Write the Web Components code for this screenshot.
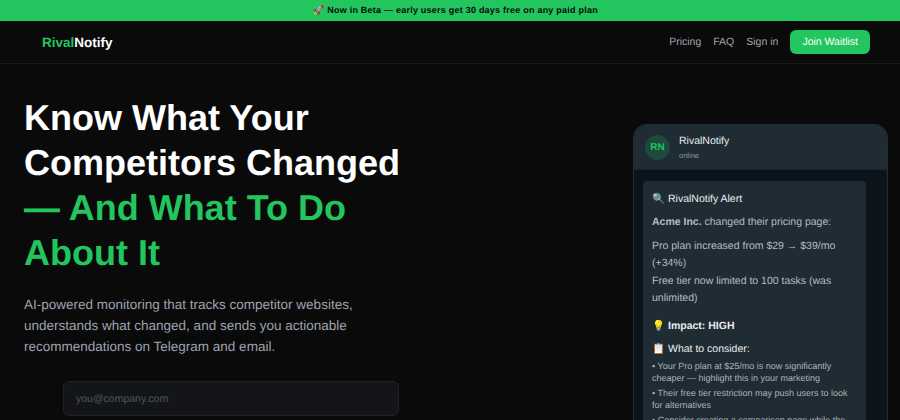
<!DOCTYPE html>
<html><head><meta charset="utf-8"><style>
html,body{margin:0;padding:0;height:420px;overflow:hidden;background:#0a0a0a;font-family:"Liberation Sans",Arial,sans-serif;text-rendering:geometricPrecision}
</style></head><body>
<rn-banner>🚀 Now in Beta — early users get 30 days free on any paid plan</rn-banner>
<rn-nav></rn-nav>
<rn-hero></rn-hero>
<script>
function def(name, html){
  customElements.define(name, class extends HTMLElement{
    constructor(){super();this.attachShadow({mode:'open'}).innerHTML=html;}
  });
}
def('rn-banner',`<style>:host{display:block;height:21px;padding-left:11px;background:#22c55e;color:#0a0a0a;font:bold 9px/21px "Liberation Sans",sans-serif;letter-spacing:.23px;text-align:center}</style><slot></slot>`);
def('rn-nav',`<style>
:host{display:flex;align-items:center;justify-content:space-between;height:42px;padding:0 30px 0 42px;border-bottom:1px solid #1a1a1a}
.logo{font-weight:700;font-size:13.5px;color:#fff}.logo span{color:#22c55e}
.links{display:flex;align-items:center;gap:12px;font-size:10.5px;color:#9ca3af}
.btn{background:#22c55e;color:#fff;height:24px;line-height:24px;padding:0 12px;border-radius:6px}
</style><div class="logo"><span>Rival</span>Notify</div><div class="links"><span>Pricing</span><span>FAQ</span><span>Sign in</span><span class="btn">Join Waitlist</span></div>`);
def('rn-form',`<style>
:host{display:block;width:336px;margin-left:39px}
.in{box-sizing:border-box;height:35px;background:#141518;border:1px solid #222;border-radius:6px;padding:0 12px;font-size:10.5px;line-height:34px;color:#4b5563}
</style><div class="in">you@company.com</div>`);
def('rn-phone',`<style>
:host{display:block;width:255px;box-sizing:border-box;border:1px solid #222d34;border-bottom:0;border-radius:14px 14px 0 0;overflow:hidden;background:#0b141a;height:296px}
.head{box-sizing:border-box;display:flex;align-items:center;gap:9px;height:45px;padding:1px 12px 0 11px;background:#1f2c34;border-bottom:1px solid #1a252c}
.av{width:25px;height:25px;border-radius:50%;background:#1d4a3c;color:#22c55e;font:bold 10px/25px "Liberation Sans",sans-serif;text-align:center}
.name{font-size:10.5px;color:#e9edef;line-height:14px}.st{font-size:7.5px;color:#8696a0;line-height:11px;margin-top:2px}
.chat{padding:11px 21px 0 9px}
.msg{background:#1f2c34;border-radius:4px;padding:9.5px 9px;color:#b5bdc3;font-size:10.5px;line-height:17.5px}
p{margin:0}.w{color:#e9edef}b{font-weight:700}
.gap{margin-top:6px}.gap2{margin-top:10px}.sm{font-size:9px;line-height:12px;color:#aab3b9;margin-top:1px}.sm p{margin-bottom:3px}
</style><div class="head"><div class="av">RN</div><div><div class="name">RivalNotify</div><div class="st">online</div></div></div>
<div class="chat"><div class="msg">
<p class="w">🔍 RivalNotify Alert</p>
<p class="gap"><b>Acme Inc.</b> changed their pricing page:</p>
<p class="gap">Pro plan increased from $29 → $39/mo (+34%)</p>
<p>Free tier now limited to 100 tasks (was unlimited)</p>
<p class="gap2 w"><b>💡 Impact: HIGH</b></p>
<p class="gap w">📋 What to consider:</p>
<div class="sm"><p>• Your Pro plan at $25/mo is now significantly cheaper — highlight this in your marketing</p>
<p>• Their free tier restriction may push users to look for alternatives</p>
<p>• Consider creating a comparison page while the</p></div>
</div></div>`);
def('rn-hero',`<style>
:host{display:flex;justify-content:space-between;height:357px;padding:31px 12px 0 24px;overflow:hidden}
.l{width:400px}
h1{margin:0;font-size:36px;line-height:45px;font-weight:700;color:#fff}h1 span{color:#22c55e}
.sub{margin:19px 0 24px;font-size:13.5px;line-height:21px;color:#9ca3af;width:340px}
.r{padding-top:29px}
</style><div class="l"><h1>Know What Your Competitors Changed <span>— And What To Do About It</span></h1>
<p class="sub">AI-powered monitoring that tracks competitor websites, understands what changed, and sends you actionable recommendations on Telegram and email.</p><rn-form></rn-form></div>
<div class="r"><rn-phone></rn-phone></div>`);
</script></body></html>
